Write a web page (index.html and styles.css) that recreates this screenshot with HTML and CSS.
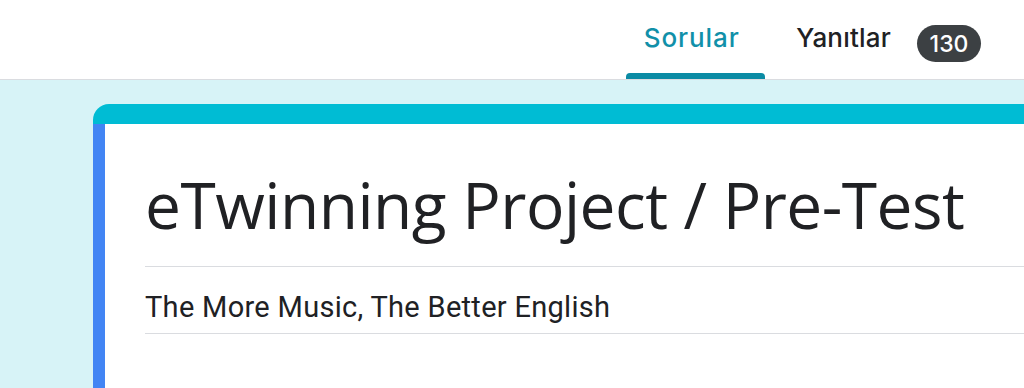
FILE: index.html
```html
<!DOCTYPE html>
<html lang="tr">
<head>
<meta charset="utf-8">
<title>eTwinning Project / Pre-Test</title>
<link rel="stylesheet" href="styles.css">
</head>
<body>
<header class="topbar">
  <nav class="tabs">
    <a class="tab tab-active">Sorular</a>
    <a class="tab tab-responses">Yanıtlar</a>
    <span class="badge">130</span>
  </nav>
</header>
<main class="canvas">
  <section class="card">
    <div class="card-body">
      <h1 class="title">eTwinning Project / Pre-Test</h1>
      <p class="desc">The More Music, The Better English</p>
    </div>
  </section>
</main>
</body>
</html>
```
FILE: styles.css
```css
html, body {
  margin: 0;
  padding: 0;
  width: 1024px;
  height: 388px;
  overflow: hidden;
  background: #d7f3f7;
}
.topbar {
  height: 79px;
  background: #ffffff;
  border-bottom: 1px solid #dadce0;
  display: flex;
  justify-content: flex-end;
}
.tabs {
  display: flex;
  align-items: flex-start;
  margin-right: 43px;
  height: 79px;
}
.tab {
  font-family: "Inter", "Roboto", sans-serif;
  font-size: 26px;
  font-weight: 500;
  line-height: 32px;
  color: #202124;
  padding: 22px 0 0;
  height: 79px;
  box-sizing: border-box;
  position: relative;
  letter-spacing: 0.2px;
  white-space: nowrap;
}
.tab-active {
  width: 139px;
  text-align: center;
  padding-right: 8px;
  letter-spacing: 0.9px;
  color: #1190a9;
}
.tab-active::after {
  content: "";
  position: absolute;
  left: 0;
  right: 0;
  bottom: 0;
  height: 6px;
  background: #0b8ba4;
  border-radius: 4px 4px 0 0;
}
.tab-responses {
  padding-left: 31px;
  padding-right: 26px;
}
.badge {
  margin-top: 25px;
  display: flex;
  align-items: center;
  justify-content: center;
  width: 64px;
  height: 37px;
  border-radius: 19px;
  background: #3c4043;
  color: #ffffff;
  font-family: "Inter", "Roboto", sans-serif;
  font-weight: 500;
  font-size: 23px;
}
.canvas {
  padding: 24px 0 0 93px;
}
.card {
  width: 1000px;
  height: 300px;
  background: #ffffff;
  border-top: 20px solid #00bcd4;
  border-radius: 16px 0 0 0;
  box-sizing: border-box;
  overflow: hidden;
}
.card-body {
  border-left: 12px solid #4285f4;
  height: 100%;
  padding: 0 0 0 40px;
}
.title {
  margin: 0;
  padding: 41px 0 21px;
  font-family: "Open Sans", sans-serif;
  font-weight: 400;
  font-size: 64px;
  line-height: 80px;
  color: #202124;
  border-bottom: 1px solid #dadce0;
  letter-spacing: -0.5px;
}
.desc {
  margin: 0;
  padding: 23px 0 9px;
  font-family: "Roboto", sans-serif;
  font-size: 29px;
  line-height: 34px;
  letter-spacing: 0.3px;
  color: #202124;
  border-bottom: 1px solid #dadce0;
}
```
